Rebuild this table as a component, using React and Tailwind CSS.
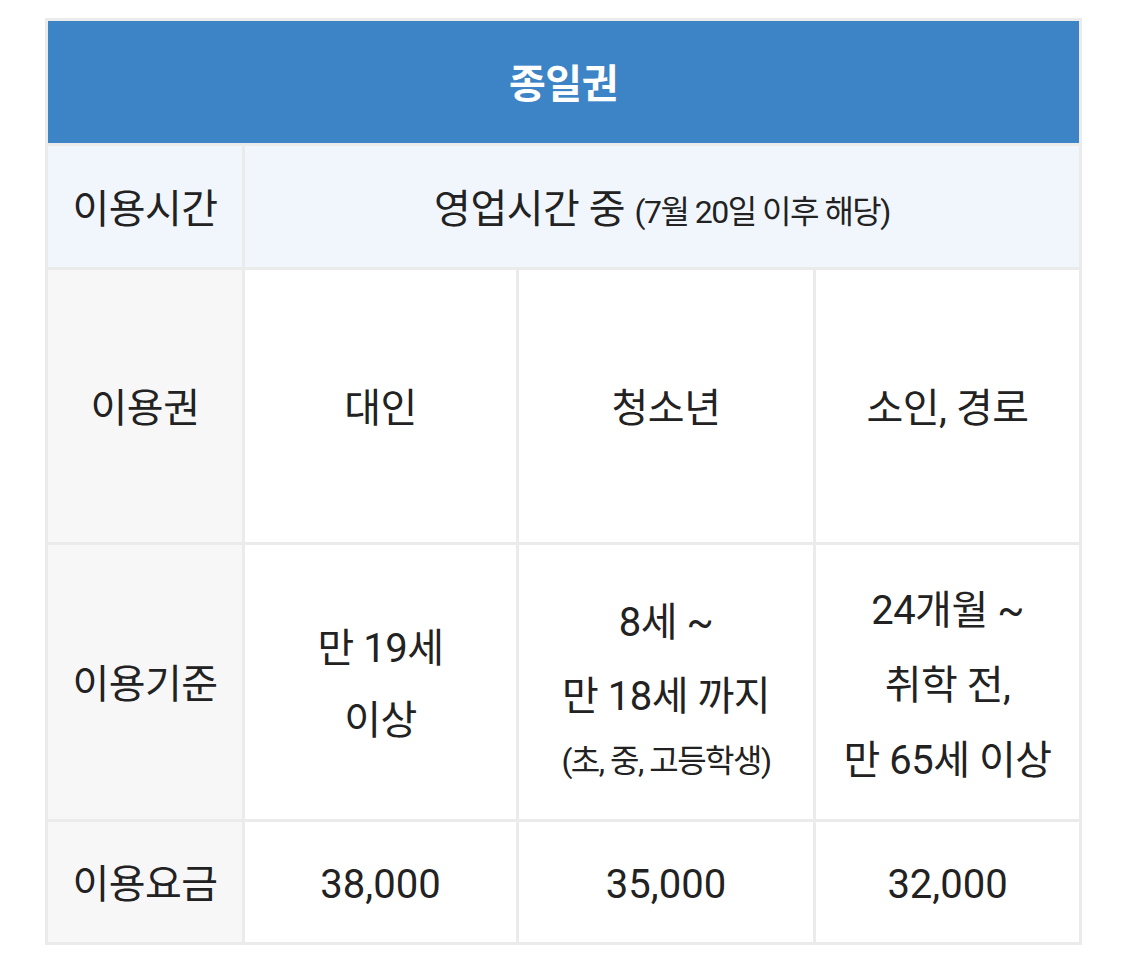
import React from 'react';

const font = { fontFamily: 'Roboto, "Noto Sans CJK KR", sans-serif' };

const cell = 'border-[3px] border-[#ebebeb] pt-[6px] text-center align-middle';

export default function App() {
  return (
    <div className="min-h-[978px] bg-white pt-[18px] pl-[45px]" style={font}>
      <table className="w-[1034px] table-fixed border-collapse text-[40px] tracking-[-0.5px] text-[#222]">
        <colgroup>
          <col className="w-[197px]" />
          <col className="w-[274px]" />
          <col className="w-[297px]" />
          <col className="w-[266px]" />
        </colgroup>
        <tbody>
          <tr className="h-[125px]">
            <td colSpan={4} className={`${cell} bg-[#3d84c6] font-bold text-white`}>
              종일권
            </td>
          </tr>
          <tr className="h-[124px] bg-[#f1f6fd]">
            <td className={cell}>이용시간</td>
            <td colSpan={3} className={cell}>
              영업시간 중 <span className="text-[32px] tracking-[-1.5px]">(7월 20일 이후 해당)</span>
            </td>
          </tr>
          <tr className="h-[275px]">
            <td className={`${cell} bg-[#f7f7f7]`}>이용권</td>
            <td className={cell}>대인</td>
            <td className={cell}>청소년</td>
            <td className={cell}>소인, 경로</td>
          </tr>
          <tr className="h-[277px]">
            <td className={`${cell} bg-[#f7f7f7]`}>이용기준</td>
            <td className={`${cell} leading-[72px]`}>
              <div>만 19세</div>
              <div>이상</div>
            </td>
            <td className={`${cell} leading-[74px]`}>
              <div className="pt-[4px]">8세 ~</div>
              <div>만 18세 까지</div>
              <div className="text-[32px] leading-[54px] tracking-[-1.5px]">(초, 중, 고등학생)</div>
            </td>
            <td className={`${cell} leading-[75px]`}>
              <div>24개월 ~</div>
              <div>취학 전,</div>
              <div>만 65세 이상</div>
            </td>
          </tr>
          <tr className="h-[123px]">
            <td className={`${cell} bg-[#f7f7f7]`}>이용요금</td>
            <td className={`${cell} tracking-normal`}>38,000</td>
            <td className={`${cell} tracking-normal`}>35,000</td>
            <td className={`${cell} tracking-normal`}>32,000</td>
          </tr>
        </tbody>
      </table>
    </div>
  );
}
